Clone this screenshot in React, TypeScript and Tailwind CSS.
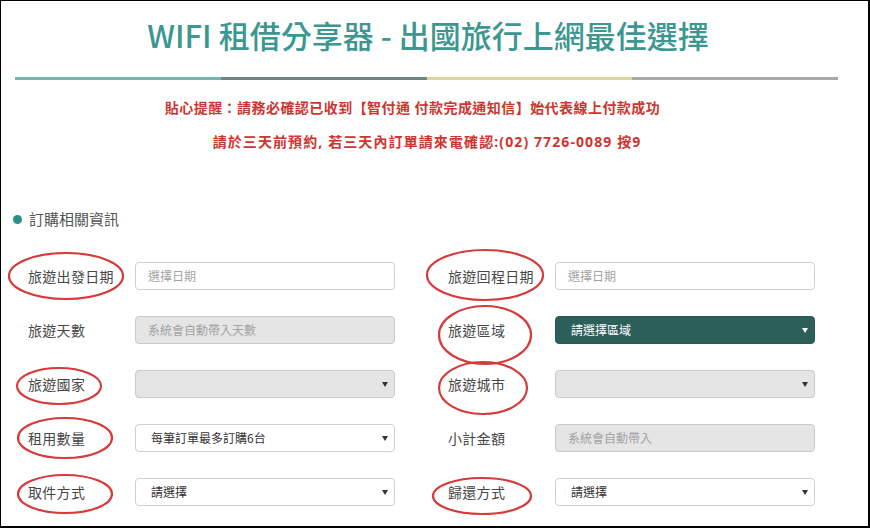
import React from "react";

const font = { fontFamily: '"Noto Sans CJK TC", "Noto Sans", sans-serif' };
const redFont = { fontFamily: '"Open Sans", "Noto Sans CJK TC", sans-serif' };

type Field = {
  label: string;
  kind: "input" | "disabled" | "select" | "selectDisabled" | "selectDark";
  text?: string;
};

const rows: [Field, Field][] = [
  [
    { label: "旅遊出發日期", kind: "input", text: "選擇日期" },
    { label: "旅遊回程日期", kind: "input", text: "選擇日期" },
  ],
  [
    { label: "旅遊天數", kind: "disabled", text: "系統會自動帶入天數" },
    { label: "旅遊區域", kind: "selectDark", text: "請選擇區域" },
  ],
  [
    { label: "旅遊國家", kind: "selectDisabled" },
    { label: "旅遊城市", kind: "selectDisabled" },
  ],
  [
    { label: "租用數量", kind: "select", text: "每筆訂單最多訂購6台" },
    { label: "小計金額", kind: "disabled", text: "系統會自動帶入" },
  ],
  [
    { label: "取件方式", kind: "select", text: "請選擇" },
    { label: "歸還方式", kind: "select", text: "請選擇" },
  ],
];

const Arrow: React.FC<{ white?: boolean }> = ({ white }) => (
  <span
    className={`ml-auto w-0 h-0 border-l-[3px] border-r-[3px] border-t-[5px] border-l-transparent border-r-transparent ${
      white ? "border-t-white" : "border-t-[#333]"
    }`}
  />
);

const Control: React.FC<{ field: Field }> = ({ field }) => {
  const base =
    "w-[260px] h-[28px] rounded-[4px] border flex items-center text-[12px] leading-none";
  switch (field.kind) {
    case "input":
      return (
        <div className={`${base} border-[#cfcfcf] bg-white pl-[12px] text-[#a3a3a3]`}>
          {field.text}
        </div>
      );
    case "disabled":
      return (
        <div className={`${base} border-[#c9c9c9] bg-[#e5e5e5] pl-[12px] text-[#a3a3a3]`}>
          {field.text}
        </div>
      );
    case "selectDisabled":
      return (
        <div className={`${base} border-[#c9c9c9] bg-[#e5e5e5] pl-[15px] pr-[6px]`}>
          <Arrow />
        </div>
      );
    case "selectDark":
      return (
        <div className={`${base} border-[#2a5955] bg-[#2c5e5a] pl-[15px] pr-[6px] text-white`}>
          <span>{field.text}</span>
          <Arrow white />
        </div>
      );
    default:
      return (
        <div className={`${base} border-[#cfcfcf] bg-white pl-[15px] pr-[6px] text-[#333]`}>
          <span>{field.text}</span>
          <Arrow />
        </div>
      );
  }
};

const circles = [
  { cx: 65, cy: 275, rx: 57, ry: 23 },
  { cx: 484, cy: 274, rx: 58, ry: 25 },
  { cx: 484, cy: 334, rx: 46, ry: 29 },
  { cx: 58, cy: 385, rx: 42, ry: 18 },
  { cx: 482, cy: 387, rx: 44, ry: 26 },
  { cx: 64, cy: 437, rx: 47, ry: 20 },
  { cx: 64, cy: 493, rx: 47, ry: 19 },
  { cx: 481, cy: 495, rx: 49, ry: 18 },
];

export default function App() {
  return (
    <div
      className="relative w-[870px] h-[528px] overflow-hidden bg-white border-l border-t border-r-2 border-b-2 border-black flex"
      style={font}
    >
      <div className="flex-1 flex flex-col">
        <h1 className="mt-[19px] pr-[13px] text-center text-[31px] leading-[30px] text-[#3c9790] font-medium">
          WIFI 租借分享器 - 出國旅行上網最佳選擇
        </h1>

        <div className="mt-[27px] ml-[14px] w-[823px] h-[3px] flex">
          <div className="flex-1 bg-[#6fb6ad]" />
          <div className="flex-1 bg-[#6d8584]" />
          <div className="flex-1 bg-[#dcd79c]" />
          <div className="flex-1 bg-[#a9a9a9]" />
        </div>

        <p
          className="mt-[18px] pr-[44px] text-center text-[14px] leading-[20px] font-bold text-[#cf3530] tracking-[0.45px]"
          style={redFont}
        >
          貼心提醒：請務必確認已收到【智付通 付款完成通知信】始代表線上付款成功
        </p>
        <p
          className="mt-[14px] pr-[15px] text-center text-[14px] leading-[20px] font-bold text-[#cf3530] tracking-[1.1px]"
          style={redFont}
        >
          請於三天前預約, 若三天內訂單請來電確認:(02) 7726-0089 按9
        </p>

        <div className="mt-[57px] ml-[12px] flex items-center h-[20px]">
          <span className="w-[9px] h-[9px] rounded-full bg-[#2e8f88]" />
          <span className="ml-[7px] text-[15px] text-[#555]">訂購相關資訊</span>
        </div>

        <div className="mt-[33px] ml-[27px] flex flex-col gap-[26px]">
          {rows.map((row, i) => (
            <div key={i} className="flex">
              {row.map((f) => (
                <div key={f.label} className="w-[420px] flex items-center">
                  <span className="w-[107px] text-[14px] text-[#474747] tracking-[0.3px]">
                    {f.label}
                  </span>
                  <Control field={f} />
                </div>
              ))}
            </div>
          ))}
        </div>
      </div>

      <div className="w-[13px] bg-[#f2ebf2] mr-[1px] flex flex-col">
        <div className="mt-[15px] mx-[1px] h-[160px] bg-[#a3a3a3]" />
      </div>

      <svg
        className="absolute left-0 top-0 pointer-events-none"
        width="870"
        height="528"
      >
        {circles.map((c, i) => (
          <ellipse
            key={i}
            cx={c.cx}
            cy={c.cy}
            rx={c.rx}
            ry={c.ry}
            fill="none"
            stroke="#d63a3a"
            strokeWidth="2.2"
          />
        ))}
      </svg>
    </div>
  );
}
